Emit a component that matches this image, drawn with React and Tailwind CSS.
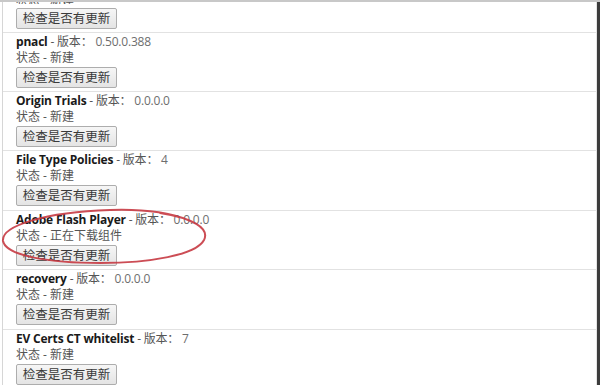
import React from 'react';

const components = [
  { name: 'pnacl', version: '0.50.0.388', status: '新建' },
  { name: 'Origin Trials', version: '0.0.0.0', status: '新建' },
  { name: 'File Type Policies', version: '4', status: '新建' },
  { name: 'Adobe Flash Player', version: '0.0.0.0', status: '正在下载组件' },
  { name: 'recovery', version: '0.0.0.0', status: '新建' },
  { name: 'EV Certs CT whitelist', version: '7', status: '新建' },
];

const font = { fontFamily: '"Open Sans", "Noto Sans CJK SC", sans-serif' };

const CheckButton = () => (
  <button className="mt-[1px] h-[21px] w-[101px] rounded-[2px] border border-[#adadad] bg-gradient-to-b from-[#f6f6f6] to-[#e4e4e4] text-[12.5px] leading-[19px] text-[#3a3a3a]">
    检查是否有更新
  </button>
);

const ComponentRow = ({ item }) => (
  <div className="h-[59.4px] border-t border-[#e2e2e2] pt-[1px] pl-[13px] text-[12px]">
    <div className="leading-[16px] whitespace-nowrap tracking-[-0.2px]">
      <span className="font-bold text-[#1a1a1a]">{item.name}</span>
      <span className="text-[#555]"> - 版本：</span>
      <span className="text-[#6e6e6e]"> {item.version}</span>
    </div>
    <div className="leading-[16px] text-[#555]">状态 - {item.status}</div>
    <CheckButton />
  </div>
);

export default function App() {
  return (
    <div className="relative w-[600px] h-[385px] overflow-hidden bg-white" style={font}>
      <div className="flex h-full border-t-2 border-[#c8c8c8]">
        <div className="w-[2px] bg-white" />
        <div className="flex-1 overflow-hidden border-l border-[#d6d6d6] border-r border-r-[#e4e4e4]">
          {/* tail of the row scrolled off above */}
          <div className="h-[29.6px] pl-[13px] text-[12px]">
            <div className="h-[2px] overflow-hidden">
              <div className="mt-[-9px] leading-[16px] text-[#555]">状态 - 新建</div>
            </div>
            <div className="mt-[3px]">
              <CheckButton />
            </div>
          </div>
          {components.map((item) => (
            <ComponentRow key={item.name} item={item} />
          ))}
        </div>
        <div className="w-[3px] bg-[#3c3c3c]" />
      </div>

      {/* hand-drawn annotation round the Flash row */}
      <svg className="absolute inset-0 pointer-events-none" width="600" height="385" viewBox="0 0 600 385">
        <path
          d="M 160 213 C 192 218, 210 228, 204 240 C 196 255, 150 263, 100 263 C 50 263, 6 256, 3 241 C 1 226, 45 212, 110 210 C 140 209, 168 212, 188 220"
          fill="none"
          stroke="#c73a42"
          strokeWidth="2"
          strokeLinecap="round"
          opacity="0.9"
        />
      </svg>
    </div>
  );
}
